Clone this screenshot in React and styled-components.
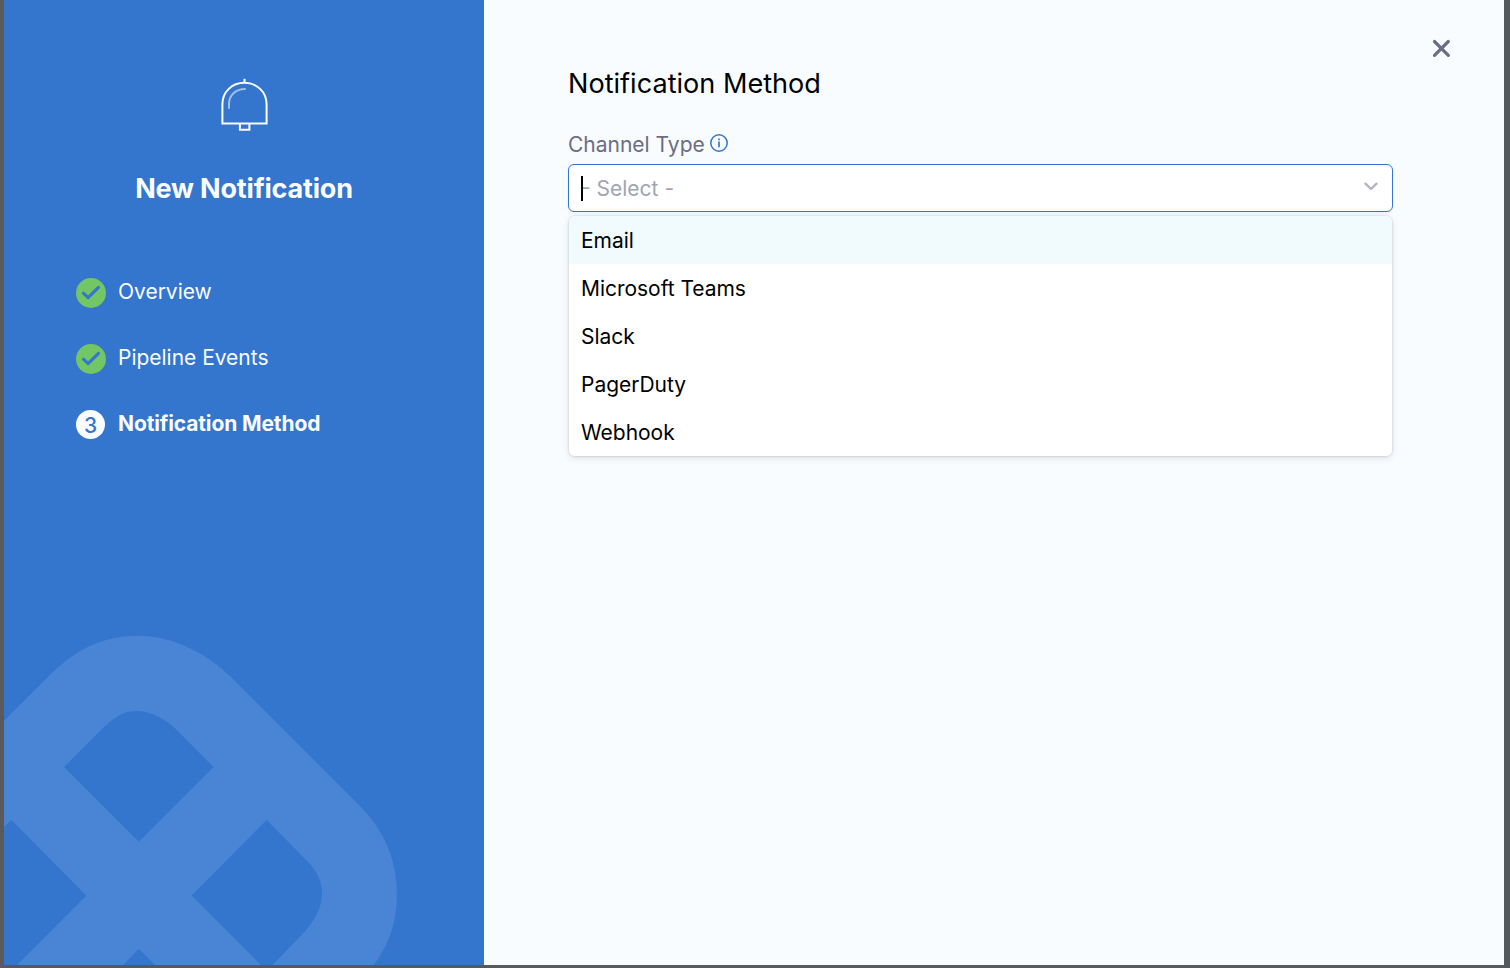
import React from "react";
import styled, { createGlobalStyle } from "styled-components";

const GlobalStyle = createGlobalStyle`
  *, *::before, *::after { box-sizing: border-box; }
  html, body { margin: 0; padding: 0; }
  body {
    background: #58595b;
    color: #000;
    font-family: Inter, "Liberation Sans", sans-serif;
    font-optical-sizing: none;
    overflow: hidden;
  }
  button { font: inherit; border: 0; padding: 0; background: none; }
`;

const Backdrop = styled.div`
  height: 968px;
  padding: 0 6px 3px 4px;
  background: linear-gradient(90deg, #5a5a5a 0 4px, #58595b 4px 1504px, #53595d 1504px);
`;

const Dialog = styled.div`
  display: flex;
  height: 100%;
  background: #f9fcff;
`;

const Sidebar = styled.aside`
  position: relative;
  width: 480px;
  flex: none;
  display: flex;
  flex-direction: column;
  align-items: center;
  padding-top: 76px;
  background: #3475ce;
  color: #fafcff;
`;

const Watermark = styled.svg`
  position: absolute;
  left: 0;
  bottom: 0;
  display: block;
`;

const SidebarTitle = styled.h1`
  margin: 37px 0 0;
  font-size: 27px;
  line-height: 36px;
  font-weight: 700;
  letter-spacing: -0.19px;
`;

const Steps = styled.ol`
  list-style: none;
  align-self: stretch;
  display: flex;
  flex-direction: column;
  gap: 36px;
  margin: 71px 0 0;
  padding: 0 0 0 72px;
`;

const Step = styled.li`
  display: flex;
  align-items: center;
  gap: 12px;
  height: 30px;
  font-size: 21px;
  font-weight: ${(p) => (p.$current ? 700 : 400)};
  letter-spacing: ${(p) => (p.$current ? "-0.12px" : "-0.02px")};
`;

const StepLabel = styled.span`
  line-height: 28px;
  margin-top: -3px;
`;

const StepMark = styled.span`
  width: 30px;
  height: 30px;
  flex: none;
  display: flex;
`;

const StepNumber = styled.span`
  width: 29px;
  height: 29px;
  border-radius: 50%;
  background: #fafcff;
  color: #3475ce;
  font-size: 21px;
  font-weight: 500;
  line-height: 31px;
  text-align: center;
`;

const Content = styled.main`
  flex: 1;
  display: flex;
  flex-direction: column;
  padding: 38px 53px 0 84px;
`;

const CloseButton = styled.button`
  align-self: flex-end;
  width: 20px;
  height: 20px;
  display: flex;
`;

const Form = styled.section`
  width: 825px;
  margin-top: 8px;
`;

const Heading = styled.h2`
  margin: 0;
  font-size: 27.1px;
  line-height: 36px;
  font-weight: 400;
`;

const Label = styled.label`
  display: flex;
  align-items: center;
  gap: 5px;
  margin-top: 28px;
  height: 30px;
  color: #6b6d85;
  font-size: 21px;
  line-height: 30px;
`;

const InfoIcon = styled.svg`
  margin-top: -5px;
`;

const SelectBox = styled.div`
  display: flex;
  align-items: center;
  justify-content: space-between;
  height: 48px;
  margin-top: 4px;
  padding: 0 14px 0 12px;
  border: 1px solid #3475ce;
  border-radius: 6px;
  background: #fff;
  box-shadow: 0 1px 3px rgba(40, 41, 61, 0.06);
`;

const Placeholder = styled.span`
  position: relative;
  padding-top: 2px;
  color: #9ea6b1;
  font-size: 21px;
  line-height: 28px;
`;

const Caret = styled.span`
  position: absolute;
  left: 0;
  top: 3px;
  width: 2px;
  height: 25px;
  background: #000;
`;

const Chevron = styled.svg`
  margin-top: -3px;
`;

const Menu = styled.ul`
  list-style: none;
  margin: 4px 0 0 1px;
  padding: 0;
  width: 823px;
  border-radius: 6px;
  overflow: hidden;
  background: #fff;
  box-shadow: 0 0 2px rgba(40, 41, 61, 0.24), 0 2px 6px rgba(96, 97, 112, 0.2);
`;

const Option = styled.li`
  height: 48px;
  padding: 1px 12px 0;
  font-size: 21px;
  line-height: 48px;
  letter-spacing: -0.03px;
  background: ${(p) => (p.$active ? "#f1fafd" : "#fff")};
`;

const steps = [
  { label: "Overview", done: true },
  { label: "Pipeline Events", done: true },
  { label: "Notification Method", done: false },
];

const channels = ["Email", "Microsoft Teams", "Slack", "PagerDuty", "Webhook"];

function Bell() {
  return (
    <svg width="50" height="58" viewBox="219 76 50 58" fill="none" stroke="#fafcff" strokeWidth="2">
      <path d="M222.400 123.400V104.500C222.400 91.800 232 82.800 244.400 82.800S266.600 91.800 266.600 104.500V123.400Z" />
      <path d="M244.500 78.800V82.800" />
      <path d="M239.900 123.400V129.800H249.400V123.400" />
      <path d="M229 108V104C229 95.300 235.600 88.900 245 88.900" stroke="#a0bfea" strokeLinecap="round" />
    </svg>
  );
}

function Check() {
  return (
    <svg width="30" height="30" viewBox="0 0 30 30" fill="none">
      <circle cx="15" cy="15" r="15" fill="#72c664" />
      <path d="M7.4 15.2L12.1 19.7L22.5 9.3" stroke="#3475ce" strokeWidth="3.1" strokeLinecap="round" strokeLinejoin="round" />
    </svg>
  );
}

function PipelineWatermark() {
  return (
    <Watermark width="400" height="335" viewBox="4 630 400 335" fill="#4984d5" fillRule="evenodd">
      <path
        d="M4 720.7L51 674C78 647 106 635.7 138 635.7C170 635.7 205 651 232 678L360 806C385 831 397 862 397 894C397 922 389 944 374 965H4Z
        M64 767L102.5 728.5C114 717 124 711 136.500 711C150 711 165 718 178 731.300L213.500 767L138.800 841.700Z
        M266.700 820L307 861C317 871 322 881 322 894C322 907 315 920 304 932.500L272.500 965H261L191.700 895.500Z
        M4 827L11.300 820L86.300 895.500L17 965H4Z
        M123 965L138.800 949L155 965Z"
      />
    </Watermark>
  );
}

export default function App() {
  return (
    <>
      <GlobalStyle />
      <Backdrop>
        <Dialog>
          <Sidebar>
            <PipelineWatermark />
            <Bell />
            <SidebarTitle>New Notification</SidebarTitle>
            <Steps>
              {steps.map((step, i) => (
                <Step key={step.label} $current={!step.done}>
                  <StepMark>{step.done ? <Check /> : <StepNumber>{i + 1}</StepNumber>}</StepMark>
                  <StepLabel>{step.label}</StepLabel>
                </Step>
              ))}
            </Steps>
          </Sidebar>
          <Content>
            <CloseButton aria-label="Close">
              <svg width="20" height="20" viewBox="0 0 20 20" fill="none" stroke="#6b6d85" strokeWidth="3.200" strokeLinecap="round">
                <path d="M3.500 3.500L17.300 17.300M17.300 3.500L3.500 17.300" />
              </svg>
            </CloseButton>
            <Form>
              <Heading>Notification Method</Heading>
              <Label>
                Channel Type
                <InfoIcon width="18" height="18" viewBox="0 0 18 18" fill="none" stroke="#3475ce">
                  <circle cx="9" cy="9" r="8.200" strokeWidth="1.500" />
                  <path d="M9 7.600V13.200M9 4.600V6.200" strokeWidth="1.700" />
                </InfoIcon>
              </Label>
              <SelectBox>
                <Placeholder>
                  - Select -
                  <Caret />
                </Placeholder>
                <Chevron width="14" height="10" viewBox="0 0 14 10" fill="none" stroke="#b3b3c4" strokeWidth="2.400" strokeLinecap="round" strokeLinejoin="round">
                  <path d="M1.500 1.700L7 7L12.500 1.700" />
                </Chevron>
              </SelectBox>
              <Menu>
                {channels.map((name, i) => (
                  <Option key={name} $active={i === 0}>{name}</Option>
                ))}
              </Menu>
            </Form>
          </Content>
        </Dialog>
      </Backdrop>
    </>
  );
}
